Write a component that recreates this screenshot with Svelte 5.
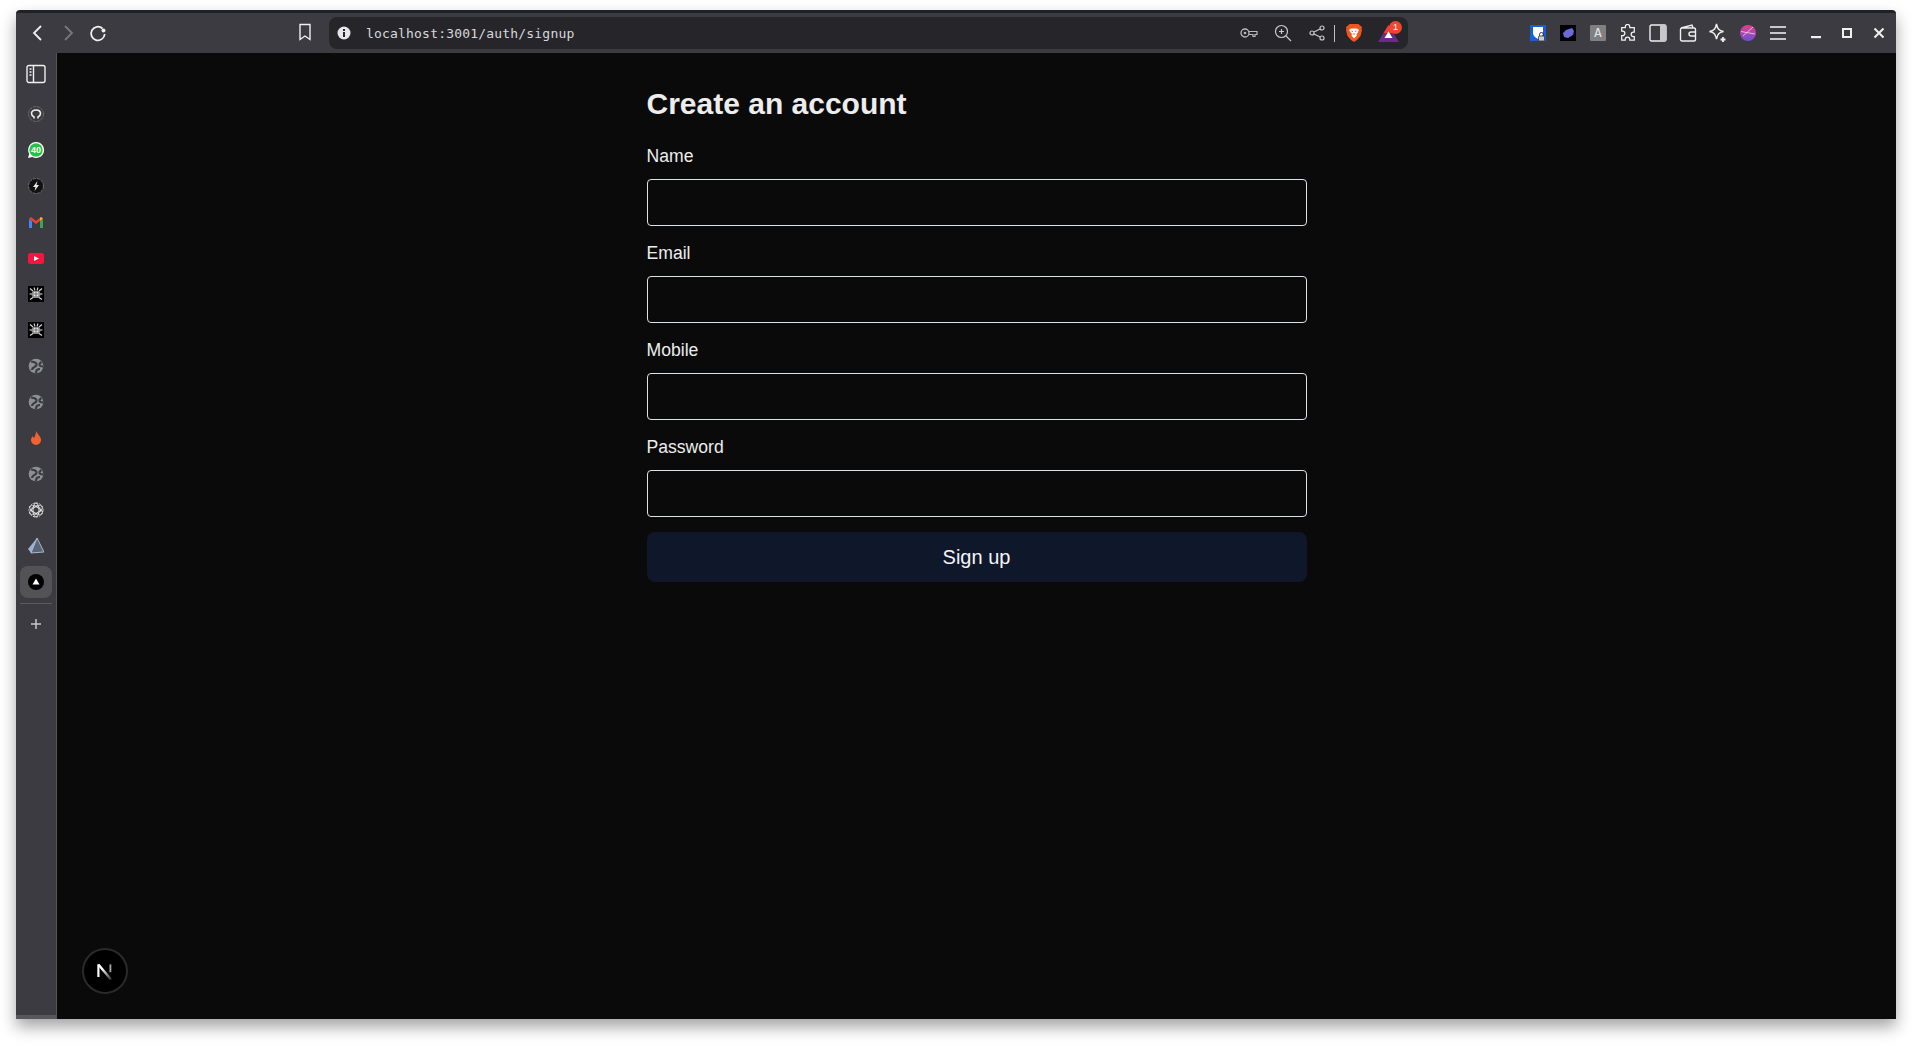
<script>
	const fields = ['Name', 'Email', 'Mobile', 'Password'];
</script>

{#snippet globe()}
	<svg width="18" height="18" viewBox="0 0 18 18">
		<circle cx="9" cy="9" r="7.300" fill="#8e9097" />
		<path d="M4 4.500c3 .5 6 1 5.500 3.500S5 9.500 5 13M14.500 5c-1.500 1-2.500 1.500-2 3s2 1.500 3.500 1.500M9 16c0-2 1-4 4-4" fill="none" stroke="#3b3b41" stroke-width="2.200" />
	</svg>
{/snippet}

{#snippet spider()}
	<svg width="16" height="16" viewBox="0 0 16 16">
		<rect width="16" height="16" fill="#000" />
		<path d="M5 5h6l2 3-2 4H5L3 8z" fill="#8d8d8d" />
		<circle cx="8" cy="8" r="2.600" fill="#e8e8e8" />
		<path d="M2 2.500l3 2.500M14 2.500l-3 2.500M1.500 8h2M14.500 8h-2M2 13.500l3-2M14 13.500l-3-2M6 1.500l1 3M10 1.500l-1 3" stroke="#ddd" stroke-width="1.100" fill="none" />
		<path d="M8 5v6M5.500 8h5" stroke="#555" stroke-width="0.800" />
	</svg>
{/snippet}

<div class="window">
	<header class="toolbar">
		<div class="tb-icon">
			<svg width="18" height="18" viewBox="0 0 18 18"><path d="M12 2L5 9l7 7" class="line bright" /></svg>
		</div>
		<div class="tb-icon">
			<svg width="18" height="18" viewBox="0 0 18 18"><path d="M6 2l7 7-7 7" class="line dim" /></svg>
		</div>
		<div class="tb-icon">
			<svg width="18" height="18" viewBox="0 0 18 18">
				<path d="M13.500 4.500A6.800 6.800 0 1 0 15.700 10" class="line bright" />
				<circle cx="14.500" cy="6.500" r="2" fill="#f0f0f2" />
			</svg>
		</div>
		<div class="tb-icon bookmark">
			<svg width="16" height="18" viewBox="0 0 16 18"><path d="M3 1.500h10v15l-5-3.500-5 3.500z" class="line bright thin" /></svg>
		</div>
		<div class="urlbar">
			<svg class="info" width="14" height="14" viewBox="0 0 14 14">
				<circle cx="7" cy="7" r="6.500" fill="#e6e6e8" />
				<rect x="6" y="6" width="2" height="5" fill="#26262a" />
				<rect x="6" y="3" width="2" height="2" fill="#26262a" />
			</svg>
			<span class="url">localhost:3001/auth/signup</span>
			<div class="url-actions">
				<div class="act">
					<svg width="18" height="12" viewBox="0 0 18 12">
						<circle cx="5" cy="6" r="4" fill="none" stroke="#b9b9bd" stroke-width="1.300" />
						<circle cx="5" cy="6" r="1.300" fill="#b9b9bd" />
						<path d="M9 4.500h8v3h-2v2h-2v-2H9" fill="none" stroke="#b9b9bd" stroke-width="1.200" />
					</svg>
				</div>
				<div class="act">
					<svg width="18" height="18" viewBox="0 0 18 18">
						<circle cx="7.500" cy="7.500" r="6" fill="none" stroke="#c9c9cc" stroke-width="1.200" />
						<path d="M12 12l5 5M5 7.500h5M7.500 5v5" stroke="#c9c9cc" stroke-width="1.200" />
					</svg>
				</div>
				<div class="act">
					<svg width="16" height="16" viewBox="0 0 16 16">
						<circle cx="13" cy="3" r="2" fill="none" stroke="#c9c9cc" stroke-width="1.200" />
						<circle cx="3" cy="8" r="2" fill="none" stroke="#c9c9cc" stroke-width="1.200" />
						<circle cx="13" cy="13" r="2" fill="none" stroke="#c9c9cc" stroke-width="1.200" />
						<path d="M5 7l6-3M5 9l6 3" stroke="#c9c9cc" stroke-width="1.200" />
					</svg>
				</div>
				<div class="divider"></div>
				<div class="act brave">
					<svg width="16" height="18" viewBox="0 0 16 18">
						<path d="M3.500 0h9l1.500 1.500L16 3l-.5 2 .5 1-1.500 6L11 16l-3 2-3-2-3.500-4L0 6l.5-1L0 3l2-1.500z" fill="#f1561f" />
						<path d="M5 4.500h6l2 1.500-1.500 3-1 1 .5 1.500L8 14.500 5.500 11.500 6 10 5 9 3 6z" fill="#fff" />
						<path d="M5.500 7l1.500.5M10.500 7L9 7.500M8 9v2" stroke="#f1561f" stroke-width="0.900" />
					</svg>
				</div>
				<div class="act rewards">
					<svg width="21" height="17" viewBox="0 0 21 17">
						<path d="M10.500 0L21 17H0z" fill="#6a2a86" />
						<path d="M10.500 0L5.500 8h10z" fill="#ee3f37" />
						<path d="M10.500 6.500L14.500 13h-8z" fill="#fff" />
					</svg>
					<span class="badge">1</span>
				</div>
			</div>
		</div>
		<div class="extensions">
			<div class="tb-icon">
				<svg width="16" height="16" viewBox="0 0 16 16">
					<rect width="16" height="16" fill="#175ddc" />
					<path d="M3 2h10v6c0 3-3 5-5 6-2-1-5-3-5-6z" fill="#fff" />
					<path d="M9.500 11V9.500a2 2 0 0 1 4 0V11" fill="none" stroke="#333" />
					<rect x="8.500" y="11" width="6" height="5" rx="1" fill="#ccc" stroke="#333" stroke-width="0.800" />
				</svg>
			</div>
			<div class="tb-icon">
				<svg width="16" height="16" viewBox="0 0 16 16">
					<rect width="16" height="16" fill="#000" />
					<path d="M3 8l3-3 6-2 2 3-1 4-5 3-4-1z" fill="#6a6ad8" />
				</svg>
			</div>
			<div class="tb-icon">
				<span class="ext-a">A</span>
			</div>
			<div class="tb-icon">
				<svg width="18" height="18" viewBox="0 0 20 20">
					<path d="M7 3a2.500 2.500 0 0 1 5 0v1h5v5h-1a2.500 2.500 0 0 0 0 5h1v4h-5v-1a2.500 2.500 0 0 0-5 0v1H3v-5h1a2.500 2.500 0 0 0 0-5H3V4h4z" class="line bright thin" />
				</svg>
			</div>
			<div class="tb-icon">
				<svg width="18" height="18" viewBox="0 0 18 18">
					<rect x="1" y="1" width="16" height="16" rx="1.500" class="line bright thin" />
					<rect x="11" y="1" width="6" height="16" fill="#c8c8cb" />
				</svg>
			</div>
			<div class="tb-icon">
				<svg width="18" height="18" viewBox="0 0 18 18">
					<path d="M2 4l11-3 1 3M1.500 5.500a1.500 1.500 0 0 1 1.500-1.500h12a1.500 1.500 0 0 1 1.500 1.500v10a1.500 1.500 0 0 1-1.500 1.500h-12a1.500 1.500 0 0 1-1.500-1.500z" class="line bright thin" />
					<path d="M17 8h-5a2 2 0 0 0 0 4h5" class="line bright thin" />
				</svg>
			</div>
			<div class="tb-icon">
				<svg width="20" height="20" viewBox="0 0 20 20">
					<path d="M8.500 1c1 5 2.500 6.500 7 7.500-4.500 1-6 2.500-7 7.500-1-5-2.500-6.500-7-7.500 4.500-1 6-2.500 7-7.500z" class="line bright thin" />
					<path d="M15 14v5M12.500 16.500h5" class="line bright" />
				</svg>
			</div>
			<div class="tb-icon">
				<svg width="16" height="16" viewBox="0 0 16 16">
					<defs>
						<linearGradient id="ball" x1="0" y1="0" x2="0" y2="1">
							<stop offset="0" stop-color="#e23f8a" />
							<stop offset="1" stop-color="#6f4fd8" />
						</linearGradient>
					</defs>
					<circle cx="8" cy="8" r="8" fill="url(#ball)" />
					<path d="M1 6.500l14 2.500M3 11L13 2" stroke="#f3d3e6" stroke-width="0.800" fill="none" />
				</svg>
			</div>
			<div class="tb-icon">
				<svg width="18" height="16" viewBox="0 0 18 16"><path d="M1 2h16M1 8h16M1 14h16" class="line soft" /></svg>
			</div>
		</div>
		<div class="controls">
			<div class="ctl">
				<svg width="12" height="12" viewBox="0 0 12 12"><rect x="1" y="9" width="10" height="2.200" fill="#f0f0f2" /></svg>
			</div>
			<div class="ctl">
				<svg width="12" height="12" viewBox="0 0 12 12"><rect x="2" y="2" width="8" height="8" fill="none" stroke="#f0f0f2" stroke-width="2" /></svg>
			</div>
			<div class="ctl">
				<svg width="12" height="12" viewBox="0 0 12 12"><path d="M1.500 1.500l9 9M10.500 1.500l-9 9" stroke="#f0f0f2" stroke-width="2" /></svg>
			</div>
		</div>
	</header>

	<div class="body">
		<aside class="sidebar">
			<div class="panel-toggle">
				<svg width="20" height="20" viewBox="0 0 20 20">
					<rect x="1" y="1.500" width="18" height="17" rx="2" class="line bright thin" />
					<path d="M7.500 1.500v17" class="line bright thin" />
					<path d="M3.500 5h2M3.500 8h2M3.500 11h2" class="line bright thin" />
				</svg>
			</div>
			<div class="side-item">
				<svg width="16" height="16" viewBox="0 0 16 16">
					<circle cx="8" cy="8" r="7.500" fill="none" stroke="#6d6d72" stroke-dasharray="3 1" />
					<path d="M6 12.500V11c-2-1-2.500-2-2.500-3.500C3.500 5.500 5 4 8 4s4.500 1.500 4.500 3.500c0 1.500-.5 2.500-2.500 3.500v1.500" fill="none" stroke="#eee" stroke-width="1.600" />
				</svg>
			</div>
			<div class="side-item">
				<svg width="18" height="18" viewBox="0 0 18 18">
					<path d="M9 1a8 8 0 1 1-3.800 15L1 17l1.200-4A8 8 0 0 1 9 1z" fill="#fff" />
					<circle cx="9" cy="9" r="6.700" fill="#25c244" />
					<text x="9" y="12" class="wa">40</text>
				</svg>
			</div>
			<div class="side-item">
				<svg width="16" height="16" viewBox="0 0 16 16">
					<circle cx="8" cy="8" r="7.500" fill="#111" stroke="#6d6d72" stroke-dasharray="3 1" />
					<path d="M9.500 3L5 9h2.500L6.500 13 11 7H8.500z" fill="#eee" />
				</svg>
			</div>
			<div class="side-item">
				<svg width="14" height="11" viewBox="0 0 14 11">
					<path d="M0 2v9h3V4z" fill="#4285f4" />
					<path d="M11 4v7h3V2z" fill="#34a853" />
					<path d="M0 1.500L7 7l7-5.500L12 0 7 4 2 0z" fill="#ea4335" />
					<path d="M11 4l3-2.500L12 0l-1 1z" fill="#fbbc04" />
				</svg>
			</div>
			<div class="side-item">
				<svg width="16" height="11" viewBox="0 0 16 11">
					<rect width="16" height="11" rx="2.500" fill="#f8143c" />
					<path d="M6 3l5 2.500L6 8z" fill="#fff" />
				</svg>
			</div>
			<div class="side-item">{@render spider()}</div>
			<div class="side-item">{@render spider()}</div>
			<div class="side-item">{@render globe()}</div>
			<div class="side-item">{@render globe()}</div>
			<div class="side-item">
				<svg width="12" height="14" viewBox="0 0 12 14">
					<path d="M6 0c1 3 5 5 5 9a5 5 0 0 1-10 0c0-2 1-3 2-4 0 1 .5 2 1 2 1-2 2-4 2-7z" fill="#f2622e" />
				</svg>
			</div>
			<div class="side-item">{@render globe()}</div>
			<div class="side-item">
				<svg width="16" height="16" viewBox="0 0 16 16">
					<g fill="none" stroke="#e8e8ea" stroke-width="0.900">
						<circle cx="8" cy="8" r="7" stroke-dasharray="2 1" />
						<circle cx="8" cy="8" r="4.500" stroke-dasharray="2 1" />
						<ellipse cx="8" cy="8" rx="7" ry="3" transform="rotate(30 8 8)" />
						<ellipse cx="8" cy="8" rx="7" ry="3" transform="rotate(-30 8 8)" />
						<ellipse cx="8" cy="8" rx="3" ry="7" />
					</g>
				</svg>
			</div>
			<div class="side-item">
				<svg width="16" height="16" viewBox="0 0 16 16">
					<path d="M9 0L0 11l3 4z" fill="#9cb0cc" />
					<path d="M9 0l7 14-13 1z" fill="#59667a" stroke="#c5d0e0" stroke-width="0.800" />
				</svg>
			</div>
			<div class="side-item active">
				<svg width="16" height="16" viewBox="0 0 16 16">
					<circle cx="8" cy="8" r="8" fill="#000" />
					<path d="M8 4.500l3.500 6h-7z" fill="#fff" />
				</svg>
			</div>
			<div class="side-sep"></div>
			<div class="side-add">
				<svg width="12" height="12" viewBox="0 0 12 12"><path d="M6 1v10M1 6h10" stroke="#c8c8cb" stroke-width="1.500" /></svg>
			</div>
			<div class="side-bottom"></div>
		</aside>

		<main class="main">
			<form class="form">
				<h1>Create an account</h1>
				{#each fields as field}
					<label class="field">
						<span>{field}</span>
						<input type={field === 'Password' ? 'password' : 'text'} />
					</label>
				{/each}
				<button type="button">Sign up</button>
			</form>
			<div class="next-badge">
				<svg width="24" height="24" viewBox="0 0 20 20">
					<defs>
						<linearGradient id="nfade" x1="0" y1="0" x2="1" y2="1">
							<stop offset="0.300" stop-color="#fff" />
							<stop offset="1" stop-color="#fff" stop-opacity="0.200" />
						</linearGradient>
					</defs>
					<path d="M4.500 15V4.500" stroke="#fff" stroke-width="1.800" />
					<path d="M4.500 4.500L15 17" stroke="url(#nfade)" stroke-width="2" />
					<path d="M14.500 4.500V11" stroke="#aaa" stroke-width="1.500" />
				</svg>
			</div>
		</main>
	</div>
</div>

<style>
	:global(body) {
		background: #fff;
	}
	.window {
		box-sizing: border-box;
		width: 1880px;
		height: 1009px;
		margin: 10px 0 32px 16px;
		display: flex;
		flex-direction: column;
		border-radius: 4px 4px 0 0;
		border-top: 3px solid #202124;
		background: #3b3b41;
		box-shadow: 0 8px 16px rgba(0, 0, 0, 0.36);
		overflow: hidden;
		font-family: 'Liberation Sans', Arial, sans-serif;
	}
	.toolbar {
		height: 40px;
		flex: none;
		display: flex;
		align-items: center;
		padding-left: 7px;
	}
	.tb-icon {
		width: 30px;
		height: 30px;
		flex: none;
		display: flex;
		align-items: center;
		justify-content: center;
	}
	.line {
		fill: none;
		stroke-width: 1.800;
	}
	.bright {
		stroke: #f0f0f2;
	}
	.dim {
		stroke: #77777c;
	}
	.soft {
		stroke: #c8c8cb;
		stroke-width: 2;
	}
	.thin {
		stroke-width: 1.400;
	}
	.bookmark {
		margin-left: 177px;
		margin-top: -2px;
	}
	.urlbar {
		width: 1079px;
		height: 32px;
		margin-left: 9px;
		flex: none;
		box-sizing: border-box;
		display: flex;
		align-items: center;
		padding-left: 8px;
		background: #26262a;
		border-radius: 8px;
	}
	.info {
		flex: none;
	}
	.url {
		margin-left: 15px;
		font-family: 'DejaVu Sans Mono', monospace;
		font-size: 13px;
		letter-spacing: 0.19px;
		color: #d8d8dc;
	}
	.url-actions {
		margin-left: auto;
		display: flex;
		align-items: center;
		padding-right: 3px;
	}
	.act {
		width: 34px;
		height: 26px;
		display: flex;
		align-items: center;
		justify-content: center;
		position: relative;
	}
	.divider {
		width: 1px;
		height: 17px;
		background: #c0c0c4;
	}
	.brave {
		margin-left: 2px;
	}
	.badge {
		position: absolute;
		top: 1px;
		right: 3px;
		width: 13px;
		height: 13px;
		border-radius: 50%;
		background: #f0452e;
		color: #fff;
		font-size: 9px;
		line-height: 13px;
		text-align: center;
	}
	.extensions {
		display: flex;
		margin-left: 115px;
		flex: none;
	}
	.ext-a {
		width: 16px;
		height: 16px;
		background: #808083;
		color: #e4e4e6;
		font-family: 'DejaVu Sans Mono', monospace;
		font-size: 13px;
		line-height: 16px;
		text-align: center;
		border-radius: 1px;
	}
	.controls {
		display: flex;
		margin-left: 7px;
	}
	.ctl {
		width: 31.5px;
		height: 30px;
		display: flex;
		align-items: center;
		justify-content: center;
	}
	.body {
		flex: 1;
		display: flex;
		min-height: 0;
	}
	.sidebar {
		width: 41px;
		flex: none;
		box-sizing: border-box;
		position: relative;
		border-right: 1px solid #55555a;
		display: flex;
		flex-direction: column;
		align-items: center;
		padding-top: 8px;
	}
	.panel-toggle {
		height: 26px;
		display: flex;
		align-items: center;
		margin-bottom: 9px;
	}
	.side-item {
		width: 32px;
		height: 36px;
		flex: none;
		display: flex;
		align-items: center;
		justify-content: center;
	}
	.side-item.active {
		height: 32px;
		margin: 2px 0;
		background: #525257;
		border-radius: 8px;
	}
	.side-sep {
		width: 32px;
		height: 1px;
		flex: none;
		margin-top: 3px;
		background: #5a5a5f;
	}
	.side-add {
		height: 24px;
		margin-top: 8px;
		display: flex;
		align-items: center;
	}
	.side-bottom {
		position: absolute;
		left: 0;
		right: 0;
		bottom: 0;
		height: 4px;
		background: #58585c;
	}
	.wa {
		font: bold 9px 'Liberation Sans', sans-serif;
		fill: #fff;
		text-anchor: middle;
	}
	.main {
		flex: 1;
		position: relative;
		background: #0a0a0a;
		display: flex;
		justify-content: center;
		align-items: flex-start;
	}
	.form {
		width: 660px;
		display: flex;
		flex-direction: column;
		padding-top: 31px;
		color: #ededed;
	}
	h1 {
		margin: 0 0 21px;
		font-size: 30px;
		line-height: 39px;
		font-weight: 700;
	}
	.field {
		display: flex;
		flex-direction: column;
		margin-bottom: 15px;
	}
	.field span {
		font-size: 17.6px;
		line-height: 24px;
		margin-bottom: 11px;
	}
	input {
		box-sizing: border-box;
		width: 100%;
		height: 47px;
		background: transparent;
		border: 1px solid #dde1e8;
		border-radius: 4px;
		outline: none;
	}
	button {
		height: 50px;
		margin-top: 0;
		border: 0;
		border-radius: 8px;
		background: #0f172a;
		color: #f4f5f7;
		font-family: inherit;
		font-size: 20px;
	}
	.next-badge {
		position: absolute;
		left: 25px;
		bottom: 25px;
		width: 46px;
		height: 46px;
		box-sizing: border-box;
		border-radius: 50%;
		background: #000;
		border: 2px solid #2a2a2a;
		display: flex;
		align-items: center;
		justify-content: center;
	}
</style>
